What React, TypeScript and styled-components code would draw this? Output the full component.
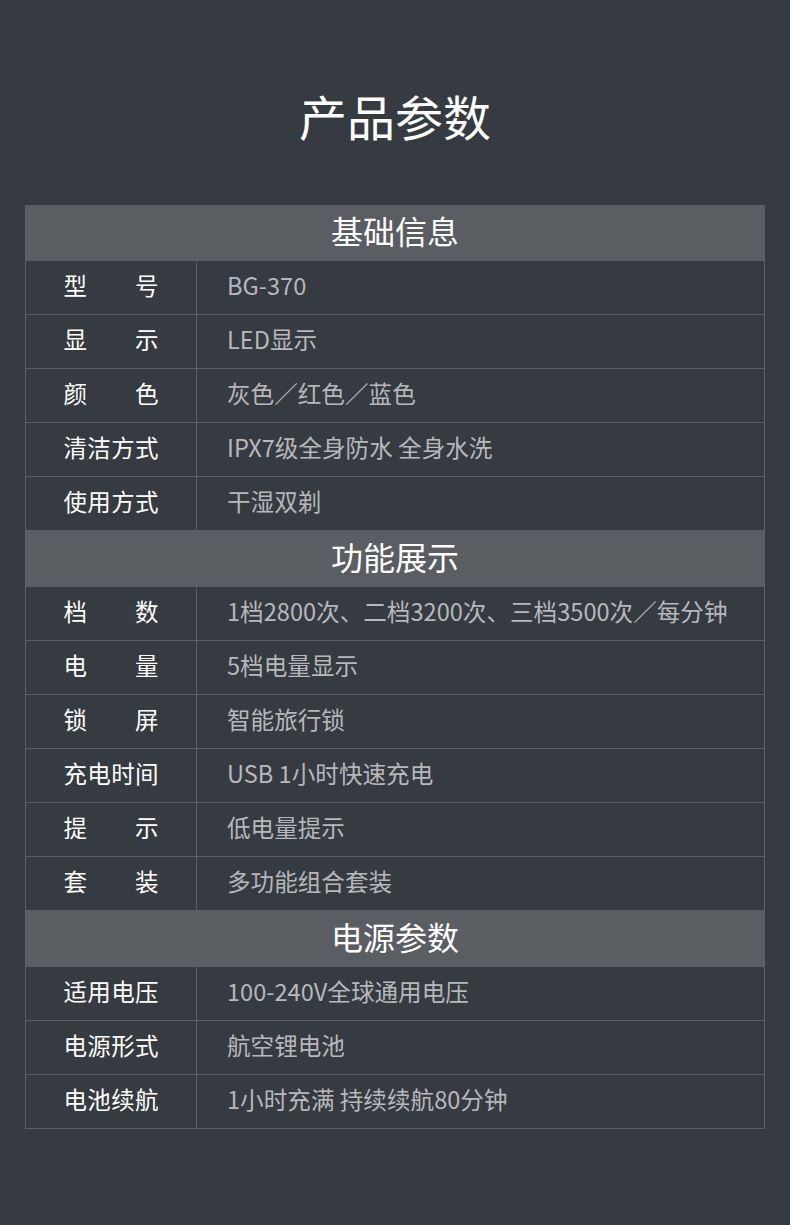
import React from "react";
import styled, { createGlobalStyle } from "styled-components";

const Global = createGlobalStyle`
  html, body { margin: 0; padding: 0; background: #363a41; }
  body { font-family: "Noto Sans CJK SC", "Noto Sans", sans-serif; }
`;

const Page = styled.div`
  width: 790px;
  min-height: 1225px;
  background: #363a41;
  padding-top: 82px;
  box-sizing: border-box;
`;

const Title = styled.h1`
  margin: 0;
  text-align: center;
  color: #ffffff;
  font-size: 48px;
  font-weight: 400;
  line-height: 66px;
  height: 66px;
`;

const Table = styled.div`
  width: 740px;
  margin: 57px auto 0;
  box-sizing: border-box;
  border-left: 1px solid #5b5f65;
  border-right: 1px solid #5b5f65;
`;

const SectionHeader = styled.div`
  height: 56px;
  box-sizing: border-box;
  padding-bottom: 6px;
  background: #5a5d62;
  color: #ffffff;
  font-size: 32px;
  line-height: 50px;
  text-align: center;
`;

const Row = styled.div`
  display: grid;
  grid-template-columns: 171px 1fr;
  height: 54px;
  box-sizing: border-box;
  border-bottom: 1px solid #5b5f65;
`;

const KeyCell = styled.div`
  display: flex;
  align-items: center;
  justify-content: center;
  padding-bottom: 6px;
  border-right: 1px solid #5b5f65;
  color: #ffffff;
  font-size: 23.5px;
`;

const KeyText = styled.div`
  width: 95px;
  display: flex;
  justify-content: space-between;
`;

const ValueCell = styled.div`
  display: flex;
  align-items: center;
  padding-left: 30px;
  padding-bottom: 6px;
  color: #b6b8bb;
  font-size: 23.6px;
  white-space: nowrap;
`;

type Item = [string, string];
type Section = { title: string; rows: Item[] };

const data: Section[] = [
  {
    title: "基础信息",
    rows: [
      ["型号", "BG-370"],
      ["显示", "LED显示"],
      ["颜色", "灰色／红色／蓝色"],
      ["清洁方式", "IPX7级全身防水 全身水洗"],
      ["使用方式", "干湿双剃"],
    ],
  },
  {
    title: "功能展示",
    rows: [
      ["档数", "1档2800次、二档3200次、三档3500次／每分钟"],
      ["电量", "5档电量显示"],
      ["锁屏", "智能旅行锁"],
      ["充电时间", "USB 1小时快速充电"],
      ["提示", "低电量提示"],
      ["套装", "多功能组合套装"],
    ],
  },
  {
    title: "电源参数",
    rows: [
      ["适用电压", "100-240V全球通用电压"],
      ["电源形式", "航空锂电池"],
      ["电池续航", "1小时充满 持续续航80分钟"],
    ],
  },
];

export default function App() {
  return (
    <Page>
      <Global />
      <Title>产品参数</Title>
      <Table>
        {data.map((s) => (
          <React.Fragment key={s.title}>
            <SectionHeader>{s.title}</SectionHeader>
            {s.rows.map(([k, v]) => (
              <Row key={k}>
                <KeyCell>
                  <KeyText>
                    {k.split("").map((c, i) => (
                      <span key={i}>{c}</span>
                    ))}
                  </KeyText>
                </KeyCell>
                <ValueCell>{v}</ValueCell>
              </Row>
            ))}
          </React.Fragment>
        ))}
      </Table>
    </Page>
  );
}
